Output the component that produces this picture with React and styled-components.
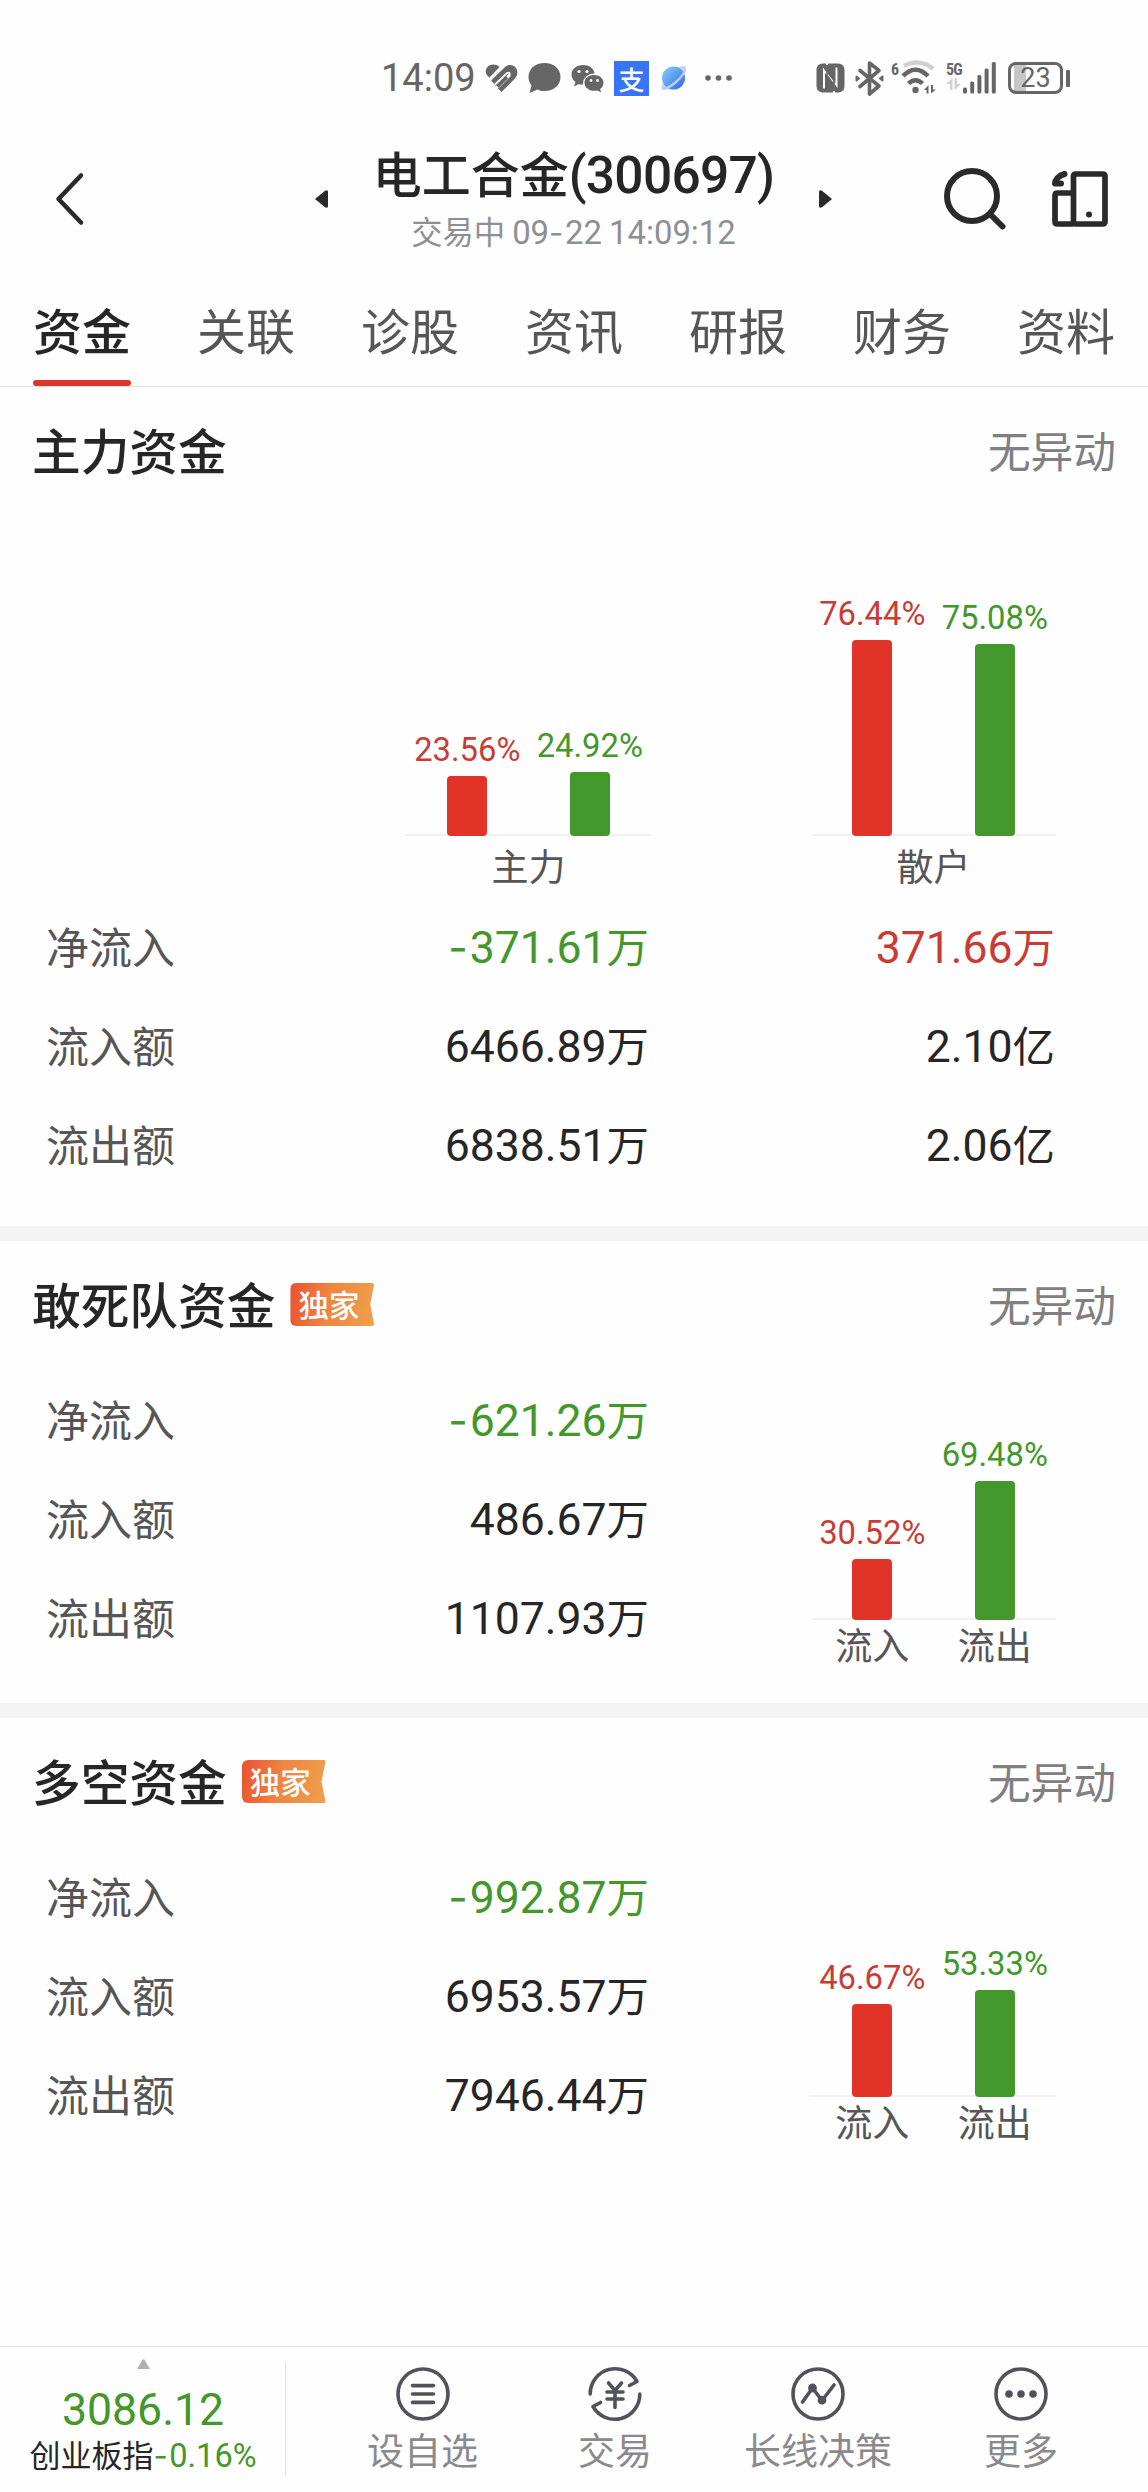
import React from 'react';
import styled, { createGlobalStyle } from 'styled-components';

const RED = '#e23329';
const GREEN = '#43972b';

const GlobalStyle = createGlobalStyle`
    * {
        box-sizing: border-box;
    }

    body {
        margin: 0;
        background: #fefefe;
        color: #262627;
        font-family: "Noto Sans CJK SC", sans-serif;
    }

    svg {
        display: block;
        flex: none;
        overflow: visible;
    }
`;

/* Figures are set in a narrower face, a touch larger than the Chinese text */
const Figure = styled.span`
    font-family: Roboto, sans-serif;
    font-size: 1.05em;
`;

const Minus = styled.span`
    font-family: Inter, sans-serif;
    letter-spacing: 0.05em;
`;

const Mixed = ({ text }) => text.split(/([0-9.:%()]+|-)/).filter(Boolean).map((part, i) => {
    if (part === '-') {
        return <Minus key={i}>{part}</Minus>;
    }
    return /^[0-9.:%()]/.test(part) ? <Figure key={i}>{part}</Figure> : <React.Fragment key={i}>{part}</React.Fragment>;
});

const Page = styled.div`
    display: flex;
    flex-direction: column;
    width: 1148px;
    height: 2492px;
    background: #fefefe;
`;

/* Status bar */
const StatusBar = styled.div`
    display: flex;
    align-items: center;
    height: 118px;
    padding: 38px 78px 0 381px;
    color: #666;
`;

const StatusGroup = styled.div`
    display: flex;
    align-items: center;
    gap: 10px;
    margin-left: ${props => (props.$end ? 'auto' : '0')};
`;

const Clock = styled.div`
    width: 94px;
    font: 400 38px/40px Roboto, sans-serif;
    white-space: nowrap;
`;

const AlipayBadge = styled.div`
    display: flex;
    align-items: center;
    justify-content: center;
    width: 35px;
    height: 35px;
    background: #3875f6;
    color: #fff;
    font-size: 26px;
    font-weight: 500;
    line-height: 33px;
`;

const Network = styled.div`
    display: flex;
    flex-direction: column;
    width: ${props => props.$width}px;
    height: 35px;
    margin-left: ${props => props.$shift || 0}px;
    margin-right: ${props => props.$pull || 0}px;
    font: 700 ${props => props.$size}px/17px "Roboto Condensed", Roboto, sans-serif;
    letter-spacing: -0.8px;
`;

const Battery = styled.div`
    display: flex;
    align-items: center;
    margin-left: 2px;
`;

const BatteryBody = styled.div`
    width: 55px;
    height: 32px;
    border: 3px solid #666;
    border-radius: 8px;
    background: linear-gradient(90deg, #fefefe 3px, #c6c6c6 3px, #c6c6c6 15px, #fefefe 15px);
    font: 400 27px/27px Roboto, sans-serif;
    text-align: center;
`;

const BatteryTip = styled.div`
    width: 4px;
    height: 17px;
    margin-left: 3px;
    border-radius: 1px;
    background: #666;
`;

/* Title bar */
const TitleBar = styled.header`
    display: flex;
    align-items: center;
    height: 162px;
    padding-left: 56px;
`;

const TitleBlock = styled.div`
    width: 491px;
    text-align: center;
    white-space: nowrap;
`;

const StockName = styled.h1`
    margin: 0;
    font-size: 49px;
    font-weight: 500;
    line-height: 60px;

    ${Figure} {
        letter-spacing: -0.7px;
    }
`;

const StockState = styled.div`
    margin-top: 3px;
    margin-bottom: 1px;
    color: #8e8f93;
    font-size: 31.3px;
    line-height: 44px;
`;

const Spacer = styled.div`
    flex: none;
    width: ${props => props.$width}px;
`;

/* Tabs */
const Tabs = styled.nav`
    display: flex;
    justify-content: space-between;
    height: 107px;
    padding: 0 33px;
    border-bottom: 1px solid #e2e2e3;
`;

const Tab = styled.div`
    display: flex;
    flex-direction: column;
    justify-content: space-between;
    width: 98px;
    padding-top: 14px;
    color: ${props => (props.$active ? '#262627' : '#565657')};
    font-size: 49px;
    font-weight: ${props => (props.$active ? 500 : 400)};
    line-height: 70px;

    &::after {
        content: "";
        height: 6px;
        border-radius: 3px;
        background: ${props => (props.$active ? '#dc352d' : 'transparent')};
    }
`;

/* Sections */
const Section = styled.section`
    padding-bottom: ${props => props.$bottom}px;
    border-bottom: ${props => (props.$last ? 0 : 15)}px solid #f4f4f4;
    flex: ${props => (props.$last ? 1 : 'none')};
`;

const SectionHead = styled.div`
    display: flex;
    align-items: center;
    height: 127px;
    margin-bottom: 3px;
    padding: 0 32px;
`;

const SectionTitle = styled.h2`
    margin: 0;
    padding-bottom: 3px;
    font-size: 48.7px;
    font-weight: 500;
    line-height: 60px;
`;

const Notice = styled.div`
    margin-left: auto;
    padding-bottom: 3px;
    color: #808082;
    font-size: 42.7px;
    line-height: 60px;
`;

const Tag = styled.div`
    width: 84px;
    height: 43px;
    margin-left: 15px;
    padding-left: 8px;
    border-radius: 6px 2px 2px 6px;
    background: linear-gradient(100deg, #ea5130 0%, #ee8540 45%, #f0a04c 100%);
    clip-path: polygon(0 0, 100% 0, 95% 50%, 100% 100%, 0 100%);
    color: #fff;
    font-size: 30.5px;
    font-weight: 500;
    line-height: 43px;
`;

const WideColumns = styled.div`
    display: grid;
    grid-template-columns: 245px 245px;
    column-gap: 160px;
    align-items: end;
    height: 381px;
    padding-left: 406px;
`;

const SplitRow = styled.div`
    display: flex;
    gap: 160px;
    padding-left: 46px;
`;

const Rows = styled.div`
    width: 605px;
`;

const Row = styled.div`
    display: flex;
    align-items: center;
    height: 99px;
    line-height: 60px;
    white-space: nowrap;
`;

const RowLabel = styled.div`
    width: 160px;
    padding-bottom: 5px;
    color: #565657;
    font-size: 43px;
`;

const RowValue = styled.div`
    width: ${props => props.$width || 443}px;
    padding-bottom: 3px;
    color: ${props => props.$color || '#262627'};
    font-size: 42.4px;
    text-align: right;
`;

/* Charts */
const Chart = styled.div`
    width: 245px;
    padding-top: ${props => props.$top || 0}px;
`;

const Bars = styled.div`
    display: flex;
    align-items: flex-end;
    height: ${props => props.$height}px;
    background: linear-gradient(#f1f1f1, #f1f1f1) 0 100% / 100% 2px no-repeat;
`;

const BarSlot = styled.div`
    display: flex;
    flex: 1;
    flex-direction: column;
    align-items: center;
    color: ${props => props.$color};
    font-size: 31.2px;
    line-height: 36px;
`;

const Bar = styled.div`
    width: 40px;
    margin-top: 8px;
    border-radius: 4px;
    background: ${props => props.$color};
`;

const Axis = styled.div`
    display: flex;
    height: ${props => props.$height}px;
    color: #565657;
    font-size: 37px;
    line-height: ${props => props.$height - 3}px;
`;

const AxisLabel = styled.div`
    flex: 1;
    text-align: center;
`;

/* Bottom bar */
const BottomBar = styled.footer`
    display: flex;
    height: 146px;
    border-top: 1px solid #e2e2e3;
`;

const IndexBox = styled.div`
    display: flex;
    flex-direction: column;
    align-items: center;
    width: 286px;
    height: 145px;
    padding-top: 12px;
    background: linear-gradient(#e4e4e5, #e4e4e5) right 15px / 1px 114px no-repeat;
    white-space: nowrap;
`;

const IndexValue = styled.div`
    margin-top: 15px;
    color: ${GREEN};
    font-size: 42.5px;
    line-height: 46px;
`;

const IndexName = styled.div`
    margin-top: 1px;
    font-size: 31px;
    line-height: 40px;
`;

const Change = styled.span`
    color: ${GREEN};
`;

const Actions = styled.div`
    display: flex;
    flex: 1;
    gap: 92px;
    padding-left: 81px;
`;

const Action = styled.div`
    display: flex;
    flex-direction: column;
    align-items: center;
    margin-right: ${props => props.$after || 0}px;
    padding-top: 20px;
    color: #8a8a8d;
    font-size: 37px;
    line-height: 44px;
    white-space: nowrap;
`;

const ActionLabel = styled.div`
    margin-top: 6px;
`;

const HealthIcon = () => (
    <svg width="33" height="29" viewBox="0 0 33 29" fill="#666">
        <path d="M4.500 13.500C-.5 10 0 5 3 2.500C6 0 11 -.3 14.500 3z" />
        <path d="M6 16.500 18 5C21 1 27 -1 31 4C34 9 31.500 13 28.500 16L16.500 28 13 24.500 25.500 12 23.500 10 11 22z" />
        <path d="M10 20.500 22 9Q25.500 7.500 24.500 12L14 22.500" fill="none" stroke="#fefefe" strokeWidth="1.800" />
        <path d="M12.500 22.500 22 13" fill="none" stroke="#666" strokeWidth="3.200" />
    </svg>
);

const BubbleIcon = () => (
    <svg width="33" height="32" viewBox="0 0 33 32" fill="#666">
        <path d="M16.500 1C26 1 32.500 7 32.500 15S26 29 16.500 29C14 29 11.500 28.500 9.500 27.500L1.500 31 3.500 23.500C1.500 21 .5 18 .5 15C.5 7 7 1 16.500 1z" />
    </svg>
);

const WechatIcon = () => (
    <svg width="33" height="29" viewBox="0 0 33 29" fill="#666">
        <path d="M12 1C19 1 23 5 23.500 9.500C17 9.500 11.500 14 12 20.500C10 20.700 9 20.500 8 20L3 22.500 4.500 18C2 16 .5 13.500 .5 10.500C.5 5 5.500 1 12 1z" />
        <path d="M23 11C28.500 11 32.500 14.500 32.500 18.800C32.500 21.300 31.200 23.500 29.200 25L30 28.500 26.500 26.500C19.500 28 13.500 24.500 13.500 18.800C13.500 14.500 17.500 11 23 11z" />
        <g fill="#fefefe">
            <circle cx="8" cy="7.500" r="1.600" />
            <circle cx="16" cy="7.500" r="1.600" />
            <circle cx="20" cy="16.500" r="1.400" />
            <circle cx="26.500" cy="16.500" r="1.400" />
        </g>
    </svg>
);

const PlanetIcon = () => (
    <svg width="28" height="27" viewBox="-2 0 28 27">
        <defs>
            <linearGradient id="planet" x1="0" y1="0" x2="1" y2="1">
                <stop offset="0" stopColor="#8ad2f9" />
                <stop offset="1" stopColor="#2b66dd" />
            </linearGradient>
        </defs>
        <path d="M16 3C21 0 26 0 25 5C23 13 8 26 2 25C0 24.500 0 21 2 17" fill="#c4d2f8" />
        <circle cx="12.500" cy="13" r="11.500" fill="url(#planet)" />
        <path d="M24 5C22 12 10 23 2.500 23.500" fill="none" stroke="#b9cbf7" strokeWidth="2.500" />
    </svg>
);

const DotsIcon = () => (
    <svg width="36" height="8" viewBox="-8 0 36 8" fill="#666">
        <circle cx="3" cy="4" r="2.800" />
        <circle cx="13.500" cy="4" r="2.800" />
        <circle cx="24" cy="4" r="2.800" />
    </svg>
);

const NfcIcon = () => (
    <svg width="29" height="30" viewBox="0 0 29 30" fill="none">
        <rect x=".5" y=".5" width="28" height="29" rx="6" fill="#666" />
        <path d="M8 25.500V7L20.500 23V4.500" stroke="#fefefe" strokeWidth="2" />
        <path d="M6.500 2.500 18 17.500V24M22.500 27.500 11 12.500V6" stroke="#666" strokeWidth="1.500" />
        <path d="M11 0V2M18 28V30" stroke="#fefefe" strokeWidth="2" />
    </svg>
);

const BluetoothIcon = () => (
    <svg width="29" height="35" viewBox="0 0 29 35" fill="none" stroke="#666" strokeWidth="3.600" strokeLinejoin="round" strokeLinecap="round">
        <path d="M5 9.500 24 25 14.500 33V2L24 9.500 5 25.500" />
        <path d="M1.500 15.500V19.500L4 17.500zM27.500 15.500V19.500L25 17.500z" strokeWidth="2" fill="#666" />
    </svg>
);

const WifiIcon = () => (
    <svg width="35" height="34" viewBox="0 0 35 34" fill="none" strokeLinecap="butt">
        <path d="M3 5C11 0 24 0 32 8" stroke="#d0d0d0" strokeWidth="4.500" />
        <path d="M2 15C10 6.500 19 6.500 27 15" stroke="#666" strokeWidth="4.500" />
        <path d="M7.500 22.500C12 18 17 18 21.500 22.500" stroke="#666" strokeWidth="4.500" />
        <circle cx="14.500" cy="29" r="3.200" fill="#666" />
        <path d="M27.500 24V32.500H25.500V29H23zM30 24V32.500L35 28.500H32V24z" fill="#666" />
    </svg>
);

const TrafficIcon = () => (
    <svg width="15" height="12" viewBox="0 0 15 12" fill="#d0d0d0">
        <path d="M6.500 0V12H4V6H0zM8.500 0V12L15 6H11V0z" />
    </svg>
);

const SignalIcon = () => (
    <svg width="33" height="32" viewBox="0 0 33 32" fill="#666">
        <rect x="0" y="25.500" width="4" height="6" rx="1.500" />
        <rect x="7.200" y="19.500" width="4" height="12" rx="1.500" />
        <rect x="14.400" y="13" width="4" height="18.500" rx="1.500" />
        <rect x="21.600" y="6.500" width="4" height="25" rx="1.500" />
        <rect x="28.800" y="0" width="4" height="31.500" rx="1.500" />
    </svg>
);

const BackIcon = () => (
    <svg width="27" height="52" viewBox="0 0 27 52" fill="none" stroke="#2a2a2b" strokeWidth="4.500" strokeLinecap="round" strokeLinejoin="round">
        <path d="M25 2.500 2.500 26 25 49.500" />
    </svg>
);

const PrevIcon = () => (
    <svg width="13" height="18" viewBox="0 0 13 18" fill="#2a2a2b">
        <path d="M0 9 10 .8Q13 -.5 13 2V16Q13 18.500 10 17.200z" />
    </svg>
);

const NextIcon = () => (
    <svg width="13" height="18" viewBox="0 0 13 18" fill="#2a2a2b">
        <path d="M13 9 3 .8Q0 -.5 0 2V16Q0 18.500 3 17.200z" />
    </svg>
);

const SearchIcon = () => (
    <svg width="62" height="62" viewBox="0 0 62 62" fill="none" stroke="#2a2a2b" strokeWidth="6" strokeLinecap="round">
        <circle cx="28" cy="28" r="25" />
        <path d="M47 47 58.500 58.500" />
    </svg>
);

const DeviceIcon = () => (
    <svg width="56" height="56" viewBox="0 0 56 56" fill="none" stroke="#2a2a2b" strokeWidth="5.700" strokeLinejoin="round">
        <rect x="21.500" y="3" width="31.500" height="50" rx="2" />
        <path d="M21.500 22H5.500Q3 22 3 24.500V50.500Q3 53 5.500 53H21.500" />
        <circle cx="37" cy="43.500" r="3" fill="#2a2a2b" stroke="none" />
        <path d="M12.500 3C6.500 4.500 3 9 3 12.500M4 12.500H9" strokeWidth="6" strokeLinecap="round" />
    </svg>
);

const UpIcon = () => (
    <svg width="13" height="10" viewBox="0 0 13 10" fill="#b0b0b0">
        <path d="M0 10 5.500 .7Q6.500 -.4 7.500 .7L13 10z" />
    </svg>
);

const ActionIcon = ({ children }) => (
    <svg width="54" height="54" viewBox="0 0 54 54" fill="none" stroke="#52525a" strokeWidth="3.600" strokeLinecap="round" strokeLinejoin="round">
        {children}
    </svg>
);

const ListIcon = () => (
    <ActionIcon>
        <circle cx="27" cy="27" r="25" />
        <path d="M16.500 18.600H37.500M16.500 27H37.500M16.500 35.400H37.500" />
    </ActionIcon>
);

const TradeIcon = () => (
    <ActionIcon>
        <path d="M2.200 27A25 25 0 0 1 49 14.500L41.500 18.500" />
        <path d="M51.800 27A25 25 0 0 1 5 39.500L12.500 35.500" />
        <path d="M20.500 16 27 23.500 33.500 16M27 23.500V40.500M19 25H35M19 32H35" />
    </ActionIcon>
);

const TrendIcon = () => (
    <ActionIcon>
        <circle cx="27" cy="27" r="25" />
        <path d="M11.500 35 21.500 21 31 33.500 43 18" />
        <circle cx="21.500" cy="21" r="2.600" fill="#52525a" />
        <circle cx="31" cy="33.200" r="2.600" fill="#52525a" />
    </ActionIcon>
);

const MoreIcon = () => (
    <ActionIcon>
        <circle cx="27" cy="27" r="25" />
        <g fill="#52525a" stroke="none">
            <circle cx="15" cy="27" r="3.800" />
            <circle cx="27" cy="27" r="3.800" />
            <circle cx="39" cy="27" r="3.800" />
        </g>
    </ActionIcon>
);

const TABS = ['资金', '关联', '诊股', '资讯', '研报', '财务', '资料'];

const MAIN_CHARTS = [
    { labels: ['主力'], values: [23.56, 24.92] },
    { labels: ['散户'], values: [76.44, 75.08] },
];

const MAIN_ROWS = [
    { label: '净流入', main: '-371.61万', retail: '371.66万', colored: true },
    { label: '流入额', main: '6466.89万', retail: '2.10亿' },
    { label: '流出额', main: '6838.51万', retail: '2.06亿' },
];

const EXCLUSIVE_FUNDS = [
    {
        title: '敢死队资金',
        values: [30.52, 69.48],
        rows: [['净流入', '-621.26万'], ['流入额', '486.67万'], ['流出额', '1107.93万']],
    },
    {
        title: '多空资金',
        values: [46.67, 53.33],
        rows: [['净流入', '-992.87万'], ['流入额', '6953.57万'], ['流出额', '7946.44万']],
    },
];

const ACTIONS = [
    { label: '设自选', icon: ListIcon, after: 8 },
    { label: '交易', icon: TradeIcon },
    { label: '长线决策', icon: TrendIcon },
    { label: '更多', icon: MoreIcon },
];

const BarChart = ({ values, labels, scale, height, axis, top }) => (
    <Chart $top={top}>
        <Bars $height={height}>
            {values.map((value, i) => (
                <BarSlot key={value} $color={i === 0 ? '#c93c35' : GREEN}>
                    <Mixed text={`${value.toFixed(2)}%`} />
                    <Bar $color={i === 0 ? RED : GREEN} style={{ height: Math.round(value * scale) }} />
                </BarSlot>
            ))}
        </Bars>
        <Axis $height={axis}>
            {labels.map(label => <AxisLabel key={label}>{label}</AxisLabel>)}
        </Axis>
    </Chart>
);

export default function App() {
    return (
        <Page>
            <GlobalStyle />
            <StatusBar>
                <StatusGroup>
                    <Clock>14:09</Clock>
                    <HealthIcon />
                    <BubbleIcon />
                    <WechatIcon />
                    <AlipayBadge>支</AlipayBadge>
                    <PlanetIcon />
                    <DotsIcon />
                </StatusGroup>
                <StatusGroup $end>
                    <NfcIcon />
                    <BluetoothIcon />
                    <Network $width={9} $size={16} $shift={-3} $pull={-9}>6</Network>
                    <WifiIcon />
                    <Network $width={17} $size={16} $pull={-10}>
                        5G
                        <Spacer $width={0} />
                        <TrafficIcon />
                    </Network>
                    <SignalIcon />
                    <Battery>
                        <BatteryBody>23</BatteryBody>
                        <BatteryTip />
                    </Battery>
                </StatusGroup>
            </StatusBar>

            <TitleBar>
                <BackIcon />
                <Spacer $width={232} />
                <PrevIcon />
                <TitleBlock>
                    <StockName><Mixed text="电工合金(300697)" /></StockName>
                    <StockState><Mixed text="交易中 09-22 14:09:12" /></StockState>
                </TitleBlock>
                <NextIcon />
                <Spacer $width={112} />
                <SearchIcon />
                <Spacer $width={46} />
                <DeviceIcon />
            </TitleBar>

            <Tabs>
                {TABS.map((tab, i) => <Tab key={tab} $active={i === 0}>{tab}</Tab>)}
            </Tabs>

            <Section $bottom={31}>
                <SectionHead>
                    <SectionTitle>主力资金</SectionTitle>
                    <Notice>无异动</Notice>
                </SectionHead>
                <WideColumns>
                    {MAIN_CHARTS.map(chart => (
                        <BarChart key={chart.labels[0]} {...chart} scale={2.56} height={250} axis={62} />
                    ))}
                </WideColumns>
                {MAIN_ROWS.map(row => (
                    <SplitRow key={row.label}>
                        <Row>
                            <RowLabel>{row.label}</RowLabel>
                            <RowValue $color={row.colored && GREEN}><Mixed text={row.main} /></RowValue>
                            <RowValue $width={406} $color={row.colored && '#c93c35'}><Mixed text={row.retail} /></RowValue>
                        </Row>
                    </SplitRow>
                ))}
            </Section>

            {EXCLUSIVE_FUNDS.map((fund, i) => (
                <Section key={fund.title} $bottom={31} $last={i === EXCLUSIVE_FUNDS.length - 1}>
                    <SectionHead>
                        <SectionTitle>{fund.title}</SectionTitle>
                        <Tag>独家</Tag>
                        <Notice>无异动</Notice>
                    </SectionHead>
                    <SplitRow>
                        <Rows>
                            {fund.rows.map(([label, value], n) => (
                                <Row key={label}>
                                    <RowLabel>{label}</RowLabel>
                                    <RowValue $color={n === 0 && GREEN}><Mixed text={value} /></RowValue>
                                </Row>
                            ))}
                        </Rows>
                        <BarChart values={fund.values} labels={['流入', '流出']} scale={2} height={199} axis={52} top={50} />
                    </SplitRow>
                </Section>
            ))}

            <BottomBar>
                <IndexBox>
                    <UpIcon />
                    <IndexValue><Mixed text="3086.12" /></IndexValue>
                    <IndexName>
                        创业板指
                        <Change><Mixed text="-0.16%" /></Change>
                    </IndexName>
                </IndexBox>
                <Actions>
                    {ACTIONS.map(({ label, icon: Icon, after }) => (
                        <Action key={label} $after={after}>
                            <Icon />
                            <ActionLabel>{label}</ActionLabel>
                        </Action>
                    ))}
                </Actions>
            </BottomBar>
        </Page>
    );
}
